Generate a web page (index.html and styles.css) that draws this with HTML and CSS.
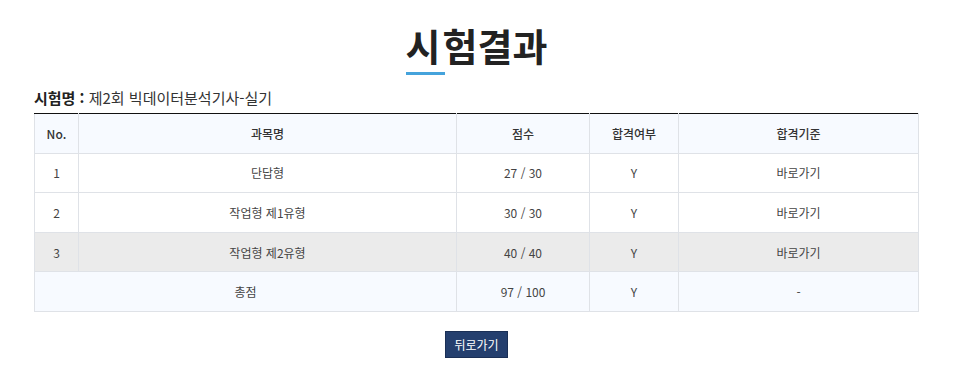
FILE: index.html
```html
<!DOCTYPE html>
<html lang="ko">
<head>
<meta charset="utf-8">
<link rel="stylesheet" href="styles.css">
</head>
<body>
<div class="page">
  <h1 class="title"><span class="first">시</span>험결과</h1>
  <div class="exam-name"><b>시험명 :</b> 제2회 빅데이터분석기사-실기</div>
  <table class="result">
    <colgroup>
      <col class="c-no"><col class="c-subj"><col class="c-score"><col class="c-pass"><col class="c-std">
    </colgroup>
    <thead>
      <tr><th>No.</th><th>과목명</th><th>점수</th><th>합격여부</th><th>합격기준</th></tr>
    </thead>
    <tbody>
      <tr><td>1</td><td>단답형</td><td>27 / 30</td><td>Y</td><td>바로가기</td></tr>
      <tr><td>2</td><td>작업형 제1유형</td><td>30 / 30</td><td>Y</td><td>바로가기</td></tr>
      <tr class="gray"><td>3</td><td>작업형 제2유형</td><td>40 / 40</td><td>Y</td><td>바로가기</td></tr>
      <tr class="total"><td colspan="2">총점</td><td>97 / 100</td><td>Y</td><td>-</td></tr>
    </tbody>
  </table>
  <div class="actions"><button class="back">뒤로가기</button></div>
</div>
</body>
</html>
```
FILE: styles.css
```css
* { box-sizing: border-box; }
body {
  margin: 0;
  background: #fff;
  font-family: "Noto Sans CJK KR", "Noto Sans", sans-serif;
  color: #333;
}
.page {
  padding: 15px 40px 0 34px;
}
.title {
  margin: 0;
  text-align: center;
  font-size: 38px;
  font-weight: 700;
  line-height: 60px;
  color: #222;
}
.title .first {
  display: inline-block;
  border-bottom: 3px solid #45a3dc;
  line-height: 54px;
  padding-right: 4px;
  margin-right: -2px;
}
.exam-name {
  margin-top: 12px;
  font-size: 15px;
  line-height: 22px;
  color: #333;
  padding-bottom: 4px;
}
.exam-name b { font-weight: 700; color: #222; }
.result {
  width: 100%;
  border-collapse: collapse;
  font-size: 12px;
  color: #444;
}
.c-no { width: 44px; }
.c-subj { width: 378px; }
.c-score { width: 133px; }
.c-pass { width: 89px; }
.result th, .result td {
  border: 1px solid #dfe2e7;
  text-align: center;
  height: 39.6px;
  padding: 0;
  font-weight: 400;
}
.result thead th { border-top: 1px solid #111; background: #f7faff; color: #333; font-weight: 500; }
.result tr.gray td { background: #ebebeb; }
.result tr.total td { background: #f7faff; }
.actions {
  text-align: center;
  margin-top: 19px;
}
.back {
  background: #243f6e;
  color: #fff;
  border: 1px solid #1a2f55;
  font-family: inherit;
  font-size: 12px;
  height: 27px;
  padding: 0 8px;
  line-height: 25px;
}
```
